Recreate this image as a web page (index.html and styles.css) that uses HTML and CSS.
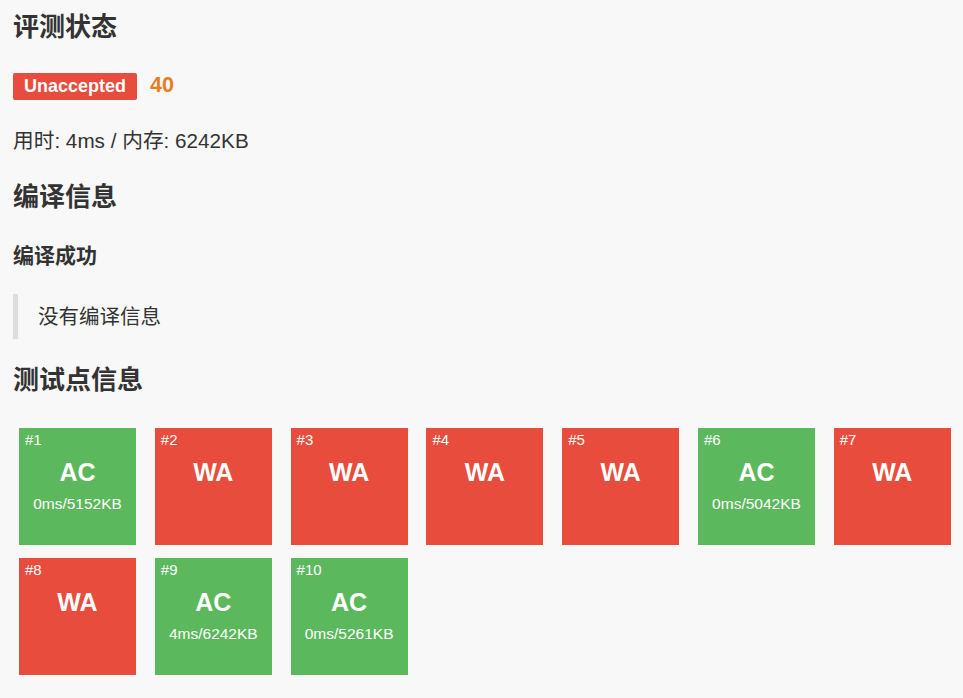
FILE: index.html
```html
<!DOCTYPE html>
<html lang="zh">
<head>
<meta charset="utf-8">
<link rel="stylesheet" href="styles.css">
</head>
<body>
<div class="page">
  <h1 class="title t-status">评测状态</h1>
  <div class="result">
    <span class="badge">Unaccepted</span>
    <span class="score">40</span>
  </div>
  <p class="usage">用时: 4ms / 内存: 6242KB</p>
  <h1 class="title t-compile">编译信息</h1>
  <h3 class="subtitle">编译成功</h3>
  <blockquote class="quote">没有编译信息</blockquote>
  <h1 class="title t-cases">测试点信息</h1>
  <div class="cases">
    <div class="case ac"><span class="num">#1</span><span class="verdict">AC</span><span class="info">0ms/5152KB</span></div>
    <div class="case wa"><span class="num">#2</span><span class="verdict">WA</span></div>
    <div class="case wa"><span class="num">#3</span><span class="verdict">WA</span></div>
    <div class="case wa"><span class="num">#4</span><span class="verdict">WA</span></div>
    <div class="case wa"><span class="num">#5</span><span class="verdict">WA</span></div>
    <div class="case ac"><span class="num">#6</span><span class="verdict">AC</span><span class="info">0ms/5042KB</span></div>
    <div class="case wa"><span class="num">#7</span><span class="verdict">WA</span></div>
    <div class="case wa"><span class="num">#8</span><span class="verdict">WA</span></div>
    <div class="case ac"><span class="num">#9</span><span class="verdict">AC</span><span class="info">4ms/6242KB</span></div>
    <div class="case ac"><span class="num">#10</span><span class="verdict">AC</span><span class="info">0ms/5261KB</span></div>
  </div>
</div>
</body>
</html>
```

FILE: styles.css
```css
html, body {
  margin: 0;
  padding: 0;
  background: #f8f8f8;
}
body {
  font-family: "Liberation Sans", "Noto Sans CJK SC", sans-serif;
  color: #333;
}
.page {
  padding: 0 4px 0 13px;
}
.title {
  font-size: 26px;
  line-height: 31px;
  font-weight: bold;
  margin: 0;
}
.t-status { margin-top: 12px; }
.t-compile { margin-top: 28px; }
.t-cases { margin-top: 26px; }
.result {
  display: flex;
  align-items: center;
  gap: 13px;
  margin-top: 30px;
  height: 27px;
}
.badge {
  display: inline-flex;
  align-items: center;
  height: 27px;
  padding: 0 11px;
  background: #e74c3c;
  color: #fff;
  font-weight: bold;
  font-size: 18px;
  border-radius: 2px;
}
.score {
  color: #e67e22;
  font-weight: bold;
  font-size: 21.5px;
  margin-top: -2px;
}
.usage {
  margin: 27px 0 0;
  font-size: 20.7px;
  line-height: 27px;
}
.subtitle {
  margin: 30px 0 0;
  font-size: 21px;
  line-height: 25px;
  font-weight: bold;
}
.quote {
  margin: 26px 0 0;
  border-left: 5px solid #ddd;
  padding: 0 0 3px 20px;
  height: 42px;
  display: flex;
  align-items: center;
  font-size: 20.5px;
}
.cases {
  display: flex;
  flex-wrap: wrap;
  column-gap: 18.8px;
  row-gap: 13px;
  margin-top: 32px;
  padding-left: 6px;
}
.case {
  position: relative;
  width: 117px;
  height: 117px;
  color: #fff;
  display: flex;
  flex-direction: column;
  align-items: center;
}
.case.ac { background: #5cb85c; }
.case.wa { background: #e74c3c; }
.num {
  position: absolute;
  left: 6px;
  top: 3px;
  font-size: 15px;
}
.verdict {
  margin-top: 29px;
  font-size: 25px;
  font-weight: bold;
  line-height: 30px;
}
.info {
  margin-top: 7px;
  font-size: 15.5px;
  line-height: 20px;
}
```
